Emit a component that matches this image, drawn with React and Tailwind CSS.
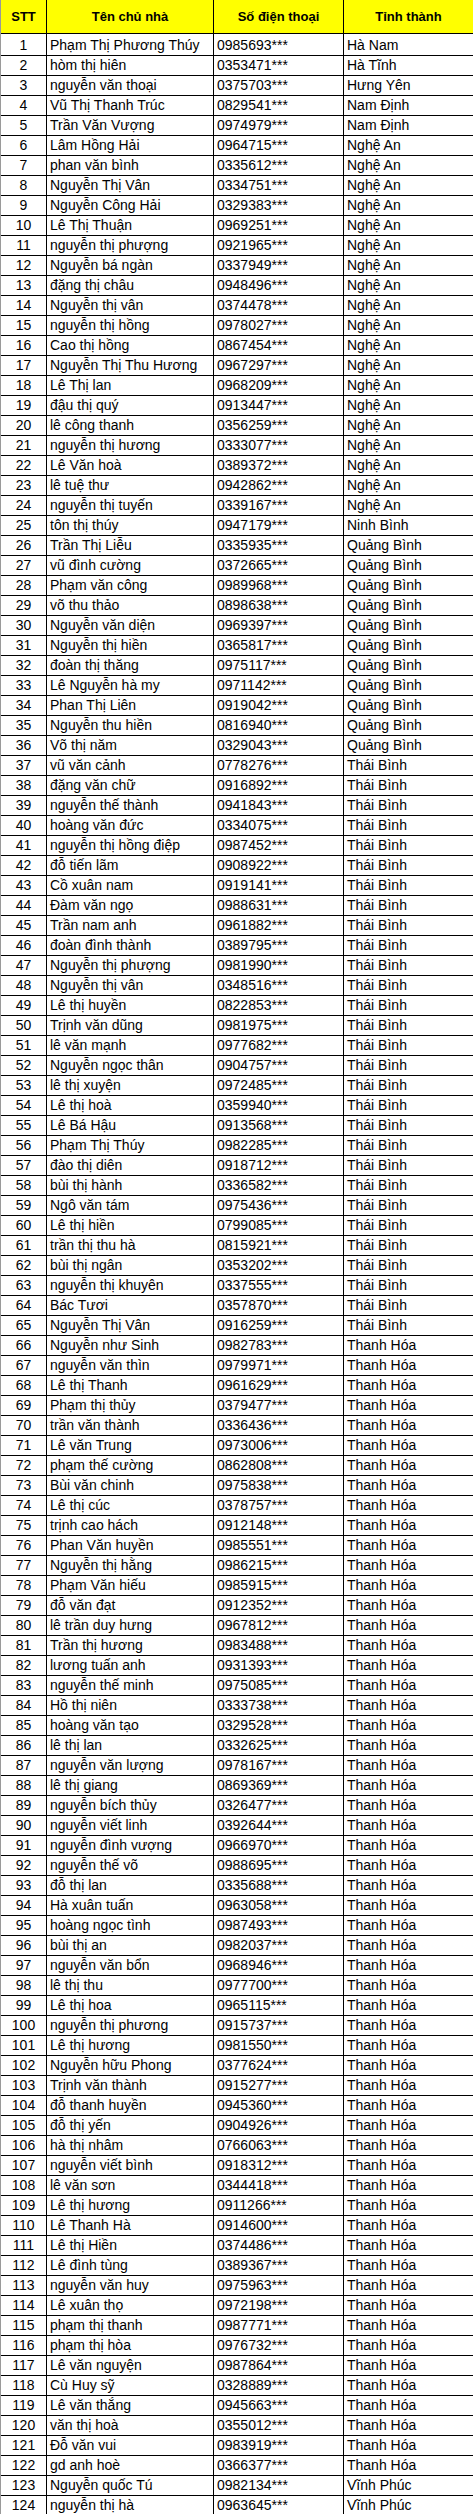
import React from "react";

const raw = `Phạm Thị Phương Thúy|0985693|Hà Nam
hòm thị hiên|0353471|Hà Tĩnh
nguyễn văn thoại|0375703|Hưng Yên
Vũ Thị Thanh Trúc|0829541|Nam Định
Trần Văn Vượng|0974979|Nam Định
Lâm Hồng Hải|0964715|Nghệ An
phan văn bình|0335612|Nghệ An
Nguyễn Thị Vân|0334751|Nghệ An
Nguyễn Công Hải|0329383|Nghệ An
Lê Thị Thuận|0969251|Nghệ An
nguyễn thị phượng|0921965|Nghệ An
Nguyễn bá ngàn|0337949|Nghệ An
đặng thị châu|0948496|Nghệ An
Nguyễn thị vân|0374478|Nghệ An
nguyễn thị hồng|0978027|Nghệ An
Cao thị hồng|0867454|Nghệ An
Nguyễn Thị Thu Hương|0967297|Nghệ An
Lê Thị lan|0968209|Nghệ An
đậu thị quý|0913447|Nghệ An
lê công thanh|0356259|Nghệ An
nguyễn thị hương|0333077|Nghệ An
Lê Văn hoà|0389372|Nghệ An
lê tuệ thư|0942862|Nghệ An
nguyễn thị tuyến|0339167|Nghệ An
tôn thị thúy|0947179|Ninh Bình
Trần Thị Liễu|0335935|Quảng Bình
vũ đình cường|0372665|Quảng Bình
Phạm văn công|0989968|Quảng Bình
võ thu thảo|0898638|Quảng Bình
Nguyễn văn diện|0969397|Quảng Bình
Nguyễn thị hiền|0365817|Quảng Bình
đoàn thị thăng|0975117|Quảng Bình
Lê Nguyễn hà my|0971142|Quảng Bình
Phan Thị Liên|0919042|Quảng Bình
Nguyễn thu hiền|0816940|Quảng Bình
Võ thị năm|0329043|Quảng Bình
vũ văn cảnh|0778276|Thái Bình
đặng văn chữ|0916892|Thái Bình
nguyễn thế thành|0941843|Thái Bình
hoàng văn đức|0334075|Thái Bình
nguyễn thị hồng điệp|0987452|Thái Bình
đỗ tiến lãm|0908922|Thái Bình
Cồ xuân nam|0919141|Thái Bình
Đàm văn ngọ|0988631|Thái Bình
Trần nam anh|0961882|Thái Bình
đoàn đình thành|0389795|Thái Bình
Nguyễn thị phượng|0981990|Thái Bình
Nguyễn thị vân|0348516|Thái Bình
Lê thị huyền|0822853|Thái Bình
Trịnh văn dũng|0981975|Thái Bình
lê văn mạnh|0977682|Thái Bình
Nguyễn ngọc thân|0904757|Thái Bình
lê thị xuyện|0972485|Thái Bình
Lê thị hoà|0359940|Thái Bình
Lê Bá Hậu|0913568|Thái Bình
Phạm Thị Thúy|0982285|Thái Bình
đào thị diên|0918712|Thái Bình
bùi thị hành|0336582|Thái Bình
Ngô văn tám|0975436|Thái Bình
Lê thị hiền|0799085|Thái Bình
trần thị thu hà|0815921|Thái Bình
bùi thị ngân|0353202|Thái Bình
nguyễn thị khuyên|0337555|Thái Bình
Bác Tươi|0357870|Thái Bình
Nguyễn Thị Vân|0916259|Thái Bình
Nguyễn như Sinh|0982783|Thanh Hóa
nguyễn văn thìn|0979971|Thanh Hóa
Lê thị Thanh|0961629|Thanh Hóa
Phạm thị thủy|0379477|Thanh Hóa
trần văn thành|0336436|Thanh Hóa
Lê văn Trung|0973006|Thanh Hóa
phạm thế cường|0862808|Thanh Hóa
Bùi văn chinh|0975838|Thanh Hóa
Lê thị cúc|0378757|Thanh Hóa
trịnh cao hách|0912148|Thanh Hóa
Phan Văn huyền|0985551|Thanh Hóa
Nguyễn thị hằng|0986215|Thanh Hóa
Phạm Văn hiếu|0985915|Thanh Hóa
đỗ văn đạt|0912352|Thanh Hóa
lê trần duy hưng|0967812|Thanh Hóa
Trần thị hương|0983488|Thanh Hóa
lương tuấn anh|0931393|Thanh Hóa
nguyễn thế minh|0975085|Thanh Hóa
Hồ thị niên|0333738|Thanh Hóa
hoàng văn tạo|0329528|Thanh Hóa
lê thị lan|0332625|Thanh Hóa
nguyễn văn lượng|0978167|Thanh Hóa
lê thị giang|0869369|Thanh Hóa
nguyễn bích thủy|0326477|Thanh Hóa
nguyễn viết linh|0392644|Thanh Hóa
nguyễn đình vượng|0966970|Thanh Hóa
nguyễn thế võ|0988695|Thanh Hóa
đỗ thị lan|0335688|Thanh Hóa
Hà xuân tuấn|0963058|Thanh Hóa
hoàng ngọc tình|0987493|Thanh Hóa
bùi thị an|0982037|Thanh Hóa
nguyễn văn bổn|0968946|Thanh Hóa
lê thị thu|0977700|Thanh Hóa
Lê thị hoa|0965115|Thanh Hóa
nguyễn thị phương|0915737|Thanh Hóa
Lê thị hương|0981550|Thanh Hóa
Nguyễn hữu Phong|0377624|Thanh Hóa
Trịnh văn thành|0915277|Thanh Hóa
đỗ thanh huyền|0945360|Thanh Hóa
đỗ thị yến|0904926|Thanh Hóa
hà thị nhâm|0766063|Thanh Hóa
nguyễn viết bình|0918312|Thanh Hóa
lê văn sơn|0344418|Thanh Hóa
Lê thị hương|0911266|Thanh Hóa
Lê Thanh Hà|0914600|Thanh Hóa
Lê thị Hiền|0374486|Thanh Hóa
Lê đình tùng|0389367|Thanh Hóa
nguyễn văn huy|0975963|Thanh Hóa
Lê xuân thọ|0972198|Thanh Hóa
phạm thị thanh|0987771|Thanh Hóa
phạm thị hòa|0976732|Thanh Hóa
Lê văn nguyện|0987864|Thanh Hóa
Cù Huy sỹ|0328889|Thanh Hóa
Lê văn thắng|0945663|Thanh Hóa
văn thị hoà|0355012|Thanh Hóa
Đỗ văn vui|0983919|Thanh Hóa
gd anh hoè|0366377|Thanh Hóa
Nguyễn quốc Tú|0982134|Vĩnh Phúc
nguyễn thị hà|0963645|Vĩnh Phúc`;

const rows = raw.split("\n").map((l, i) => {
  const [name, phone, prov] = l.split("|");
  return { stt: i + 1, name, phone: phone + "***", prov };
});

const grid = "grid grid-cols-[46px_167px_130px_130px]";

export default function App() {
  return (
    <div
      className="w-[473px] bg-white text-black text-[14px]"
      style={{ fontFamily: '"Liberation Sans", Arial, sans-serif' }}
    >
      <div className={`${grid} h-[34px] bg-[#ffff00] font-bold text-[13px] border-l border-[#9a9a9a]`}>
        <div className="flex items-center justify-center border-r border-b border-black">STT</div>
        <div className="flex items-center justify-center border-r border-b border-black">Tên chủ nhà</div>
        <div className="flex items-center justify-center border-r border-b border-black">Số điện thoại</div>
        <div className="flex items-center justify-center border-r border-b border-black">Tỉnh thành</div>
      </div>
      {rows.map((r) => (
        <div key={r.stt} className={`${grid} h-[20px] leading-[19px] border-l border-[#9a9a9a]`}>
          <div className="pt-[2px] text-center border-r border-b border-black">{r.stt}</div>
          <div className="pt-[2px] pl-[3px] whitespace-nowrap overflow-hidden border-r border-b border-black">{r.name}</div>
          <div className="pt-[2px] pl-[3px] whitespace-nowrap border-r border-b border-black">{r.phone}</div>
          <div className="pt-[2px] pl-[3px] whitespace-nowrap border-r border-b border-black">{r.prov}</div>
        </div>
      ))}
    </div>
  );
}
